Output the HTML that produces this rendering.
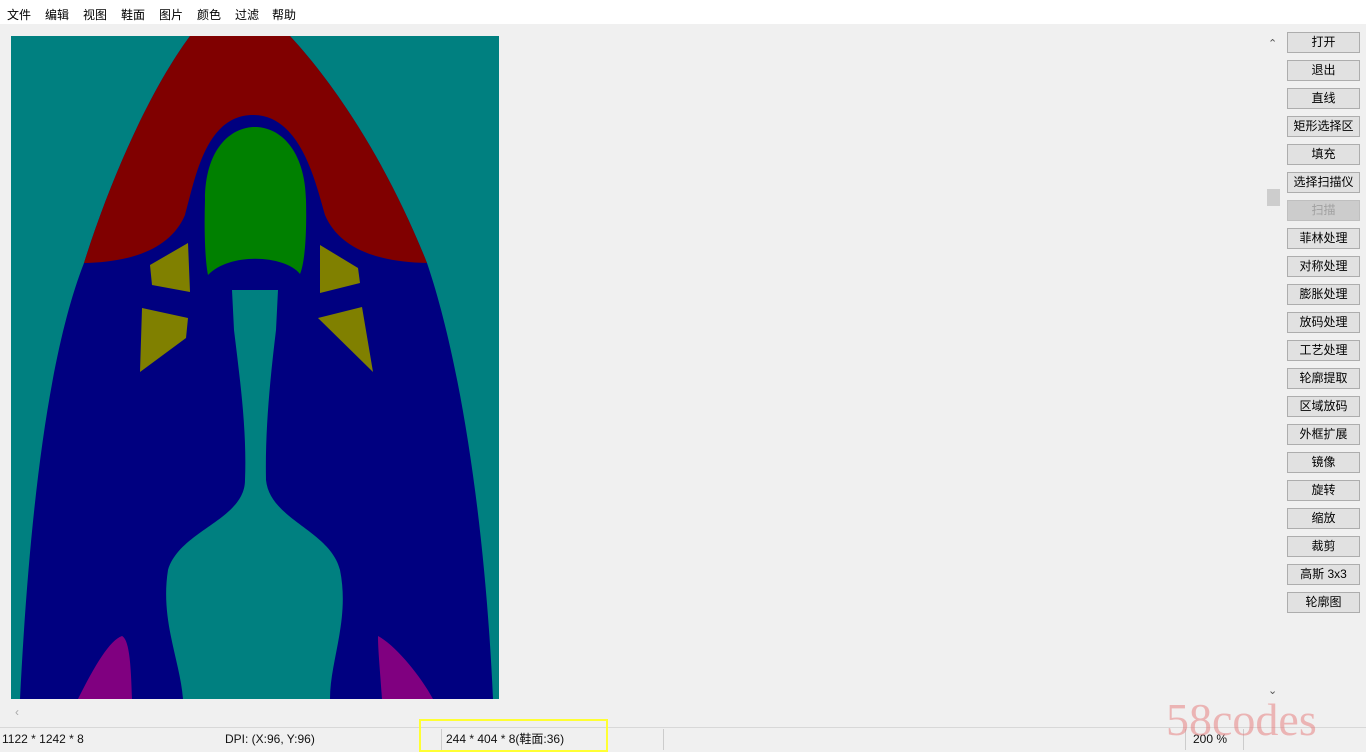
<!DOCTYPE html>
<html><head><meta charset="utf-8"><style>
body{margin:0;width:1366px;height:750px;background:#f0f0f0;font-family:"Liberation Sans","Noto Sans CJK SC",sans-serif;font-size:12px;overflow:hidden;position:relative}
.menu{position:absolute;top:0;left:0;height:24px;width:1366px;background:#fff}
.menu span{position:absolute;top:6px;font-size:12px}
.btn{position:absolute;left:1287px;width:71px;height:19px;border:1px solid #adadad;background:#e1e1e1;text-align:center;line-height:19px;font-size:12px}
.st{position:absolute;top:729px;height:21px;line-height:21px;font-size:12px;color:#111}
</style></head><body>
<div class="menu">
<span style="left:7px">文件</span><span style="left:45px">编辑</span><span style="left:83px">视图</span><span style="left:121px">鞋面</span><span style="left:159px">图片</span><span style="left:197px">颜色</span><span style="left:235px">过滤</span><span style="left:272px">帮助</span>
</div>
<svg style="position:absolute;left:11px;top:36px" width="488" height="663" viewBox="11 36 488 663">
<rect x="11" y="36" width="488" height="663" fill="#008080"/>
<path d="M20 699 C30 500 50 350 84 263 C110 180 150 90 190 36 L290 36 C340 90 390 170 427 263 C460 360 485 520 493 699 Z" fill="#000080"/>
<path d="M84 263 C110 180 150 90 190 36 L290 36 C340 90 390 170 427 263 C380 262 340 250 325 215 C315 180 300 115 253 115 C205 115 195 180 185 215 C170 250 130 262 84 263 Z" fill="#800000"/>
<path d="M205 200 C205 150 230 127 255 127 C280 127 305 150 306 200 C307 240 304 265 300 274 C285 255 230 252 208 275 C205 260 204 230 205 200 Z" fill="#008000"/>
<path d="M232 290 L278 290 L276 330 C270 380 265 430 266 480 C270 520 330 530 340 570 C350 620 330 660 330 699 L183 699 C180 660 160 620 168 570 C180 530 245 520 245 480 C247 430 240 380 234 330 Z" fill="#008080"/>
<g fill="#808000">
<path d="M150 265 L188 243 L190 292 L152 285 Z"/>
<path d="M142 308 L188 318 L186 338 L140 372 Z"/>
<path d="M320 245 L358 268 L360 283 L320 293 Z"/>
<path d="M318 318 L362 307 L373 372 Z"/>
</g>
<g fill="#800080">
<path d="M78 699 C95 665 110 640 122 636 C130 640 131 670 132 699 Z"/>
<path d="M378 636 C395 645 420 675 433 699 L382 699 C380 670 378 650 378 636 Z"/>
</g>
</svg>
<div style="position:absolute;left:1266px;top:36px;width:15px;height:665px;background:#f0f0f0"></div>
<div style="position:absolute;left:1268px;top:37px;font-size:11px;color:#555">&#8963;</div>
<div style="position:absolute;left:1267px;top:189px;width:13px;height:17px;background:#cdcdcd"></div>
<div style="position:absolute;left:1268px;top:684px;font-size:11px;color:#555">&#8964;</div>
<div style="position:absolute;left:15px;top:705px;font-size:12px;color:#aaa">&lsaquo;</div>
<div style="position:absolute;left:0;top:727px;width:1366px;height:1px;background:#d8d8d8"></div>
<div class="btn" style="top:32px">打开</div>
<div class="btn" style="top:60px">退出</div>
<div class="btn" style="top:88px">直线</div>
<div class="btn" style="top:116px">矩形选择区</div>
<div class="btn" style="top:144px">填充</div>
<div class="btn" style="top:172px">选择扫描仪</div>
<div class="btn" style="top:200px;color:#a0a0a0;background:#cccccc;border-color:#bfbfbf">扫描</div>
<div class="btn" style="top:228px">菲林处理</div>
<div class="btn" style="top:256px">对称处理</div>
<div class="btn" style="top:284px">膨胀处理</div>
<div class="btn" style="top:312px">放码处理</div>
<div class="btn" style="top:340px">工艺处理</div>
<div class="btn" style="top:368px">轮廓提取</div>
<div class="btn" style="top:396px">区域放码</div>
<div class="btn" style="top:424px">外框扩展</div>
<div class="btn" style="top:452px">镜像</div>
<div class="btn" style="top:480px">旋转</div>
<div class="btn" style="top:508px">缩放</div>
<div class="btn" style="top:536px">裁剪</div>
<div class="btn" style="top:564px">高斯 3x3</div>
<div class="btn" style="top:592px">轮廓图</div>
<div class="st" style="left:2px">1122 * 1242 * 8</div>
<div class="st" style="left:225px">DPI: (X:96, Y:96)</div>
<div style="position:absolute;left:419px;top:719px;width:185px;height:29px;border:2px solid #ffff33"></div>
<div class="st" style="left:446px">244 * 404 * 8(鞋面:36)</div>
<div style="position:absolute;left:441px;top:729px;width:1px;height:21px;background:#ccc"></div>
<div style="position:absolute;left:663px;top:729px;width:1px;height:21px;background:#ccc"></div>
<div style="position:absolute;left:1185px;top:729px;width:1px;height:21px;background:#ccc"></div>
<div style="position:absolute;left:1243px;top:729px;width:1px;height:21px;background:#ccc"></div>
<div class="st" style="left:1193px">200 %</div>
<div style="position:absolute;left:1166px;top:692px;font-family:'Liberation Serif',serif;font-size:46px;color:rgba(230,120,120,0.5);line-height:56px">58codes</div>
</body></html>
